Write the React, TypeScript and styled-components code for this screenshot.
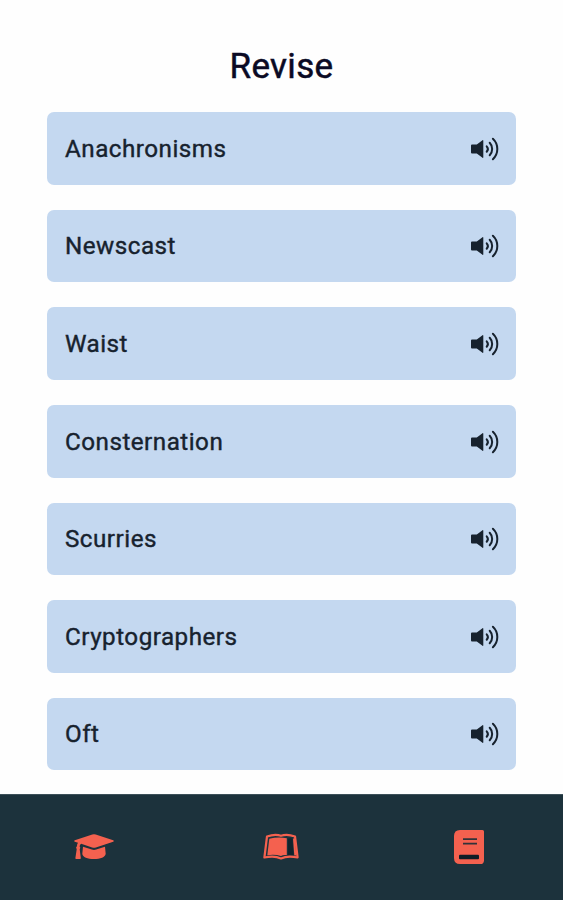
import React from "react";
import styled, { createGlobalStyle } from "styled-components";

const GlobalStyle = createGlobalStyle`
  * { box-sizing: border-box; }
  body { margin: 0; background: #fefefe; font-family: Roboto, sans-serif; }
`;
const Screen = styled.div`
  height: 900px; display: flex; flex-direction: column; overflow: hidden; background: #fefefe;
`;
const Title = styled.h1`
  margin: 46px 0 25.3px; height: 41px; line-height: 41px; text-align: center;
  font-size: 35px; font-weight: 400; color: #0a0a24; letter-spacing: 0.3px;
  -webkit-text-stroke: 0.5px currentColor;
`;
const List = styled.main`
  flex: 1; display: flex; flex-direction: column; gap: 25.1px; padding: 0 47px;
`;
const Card = styled.div`
  height: 72.5px; flex: none; display: flex; align-items: center; justify-content: space-between;
  padding: 0.6px 17px 0 18px; border-radius: 7px; background: #c4d8f0; color: #17222e;
`;
const Word = styled.span`
  font-size: 24.2px; line-height: 28px; font-weight: 400; letter-spacing: 0.5px;
  -webkit-text-stroke: 0.4px currentColor;
`;
const NavBar = styled.nav`
  height: 106px; display: grid; grid-template-columns: repeat(3, 1fr);
  place-items: center; background: #1c323c; color: #f4614f;
  border-top: 1px solid #3c5059; padding-bottom: 2px;
`;
const Icon = styled.svg`
  display: block; flex: none; overflow: visible;
`;

const Speaker = () => (
  <Icon width="28" height="26" viewBox="0 0 28 26">
    <path d="M1 8.400h4.800L11.500 4.200q.8-.5.800.5v16.600q0 1-.8.500L5.800 17.600H1q-1 0-1-1V9.400q0-1 1-1z" fill="currentColor" />
    <g fill="none" stroke="currentColor" strokeWidth="2" strokeLinecap="round">
      <path d="M15.700 10.300a4 4 0 0 1 0 5.400" />
      <path d="M18.700 6.800a9 9 0 0 1 0 12.400" />
      <path d="M21.900 2.800a14 14 0 0 1 0 20.400" />
    </g>
  </Icon>
);

const Cap = () => (
  <Icon width="40" height="26" viewBox="0 0 40 26" fill="currentColor">
    <path d="M18.300.5q1.700-.6 3.400 0l17.500 5.800q1.500.7 0 1.400l-17.300 5.800q-1.900.6-3.800 0L7.200 9.800Q5.800 10.500 5.600 12.300q1.400 1.400.1 2.900L6.800 24q.1 1-.8 1H2.200q-1 0-.8-1l1.300-8.800q-1.300-1.700.2-2.900.1-2.200 1.100-3.500L.8 7.700q-1.500-.7 0-1.400z" />
    <path d="m9 12.700 8.800 2.900q2.200.7 4.400 0l8.800-2.900.7 7c-.4 3.400-5.300 5.300-11.700 5.300S8.600 23.100 8.300 19.700z" />
  </Icon>
);

const OpenBook = () => (
  <Icon width="36" height="26" viewBox="0 0 36 26">
    <path d="M4 2.500Q12-.3 18 1.800 24-.3 32 2.500L34.600 23.500Q24.500 21.500 18 24.400 11.500 21.500 1.400 23.500Z" fill="none" stroke="currentColor" strokeWidth="2.200" strokeLinejoin="round" />
    <path d="M6.300 4.800Q15 2.700 23.800 4.300V21Q20 20.500 18 22 12 20 4.300 21.200Z" fill="currentColor" />
    <path d="M25 4.800Q27.500 3.900 29.300 4.700L30.500 21Q27.500 20.400 25 21Z" fill="#11242d" />
    <path d="M31 4.500 32.300 21.500" stroke="currentColor" strokeWidth="2" />
  </Icon>
);

const Book = () => (
  <Icon width="30" height="34" viewBox="0 0 30 34">
    <path d="M6 0H28.500Q30 0 30 1.500V31Q29.300 34 28 34H6Q0 34 0 28V6Q0 0 6 0Z" fill="currentColor" />
    <path d="M9 9.200H23M9 13.600H23" stroke="#31333a" strokeWidth="1.700" />
    <rect x="5" y="24.800" width="20" height="4.400" rx="1" fill="#101d26" />
  </Icon>
);

const words = ["Anachronisms", "Newscast", "Waist", "Consternation", "Scurries", "Cryptographers", "Oft"];

export default function App() {
  return (
    <Screen>
      <GlobalStyle />
      <Title>Revise</Title>
      <List>
        {words.map((w) => (
          <Card key={w}><Word>{w}</Word><Speaker /></Card>
        ))}
      </List>
      <NavBar>
        <Cap />
        <OpenBook />
        <Book />
      </NavBar>
    </Screen>
  );
}
